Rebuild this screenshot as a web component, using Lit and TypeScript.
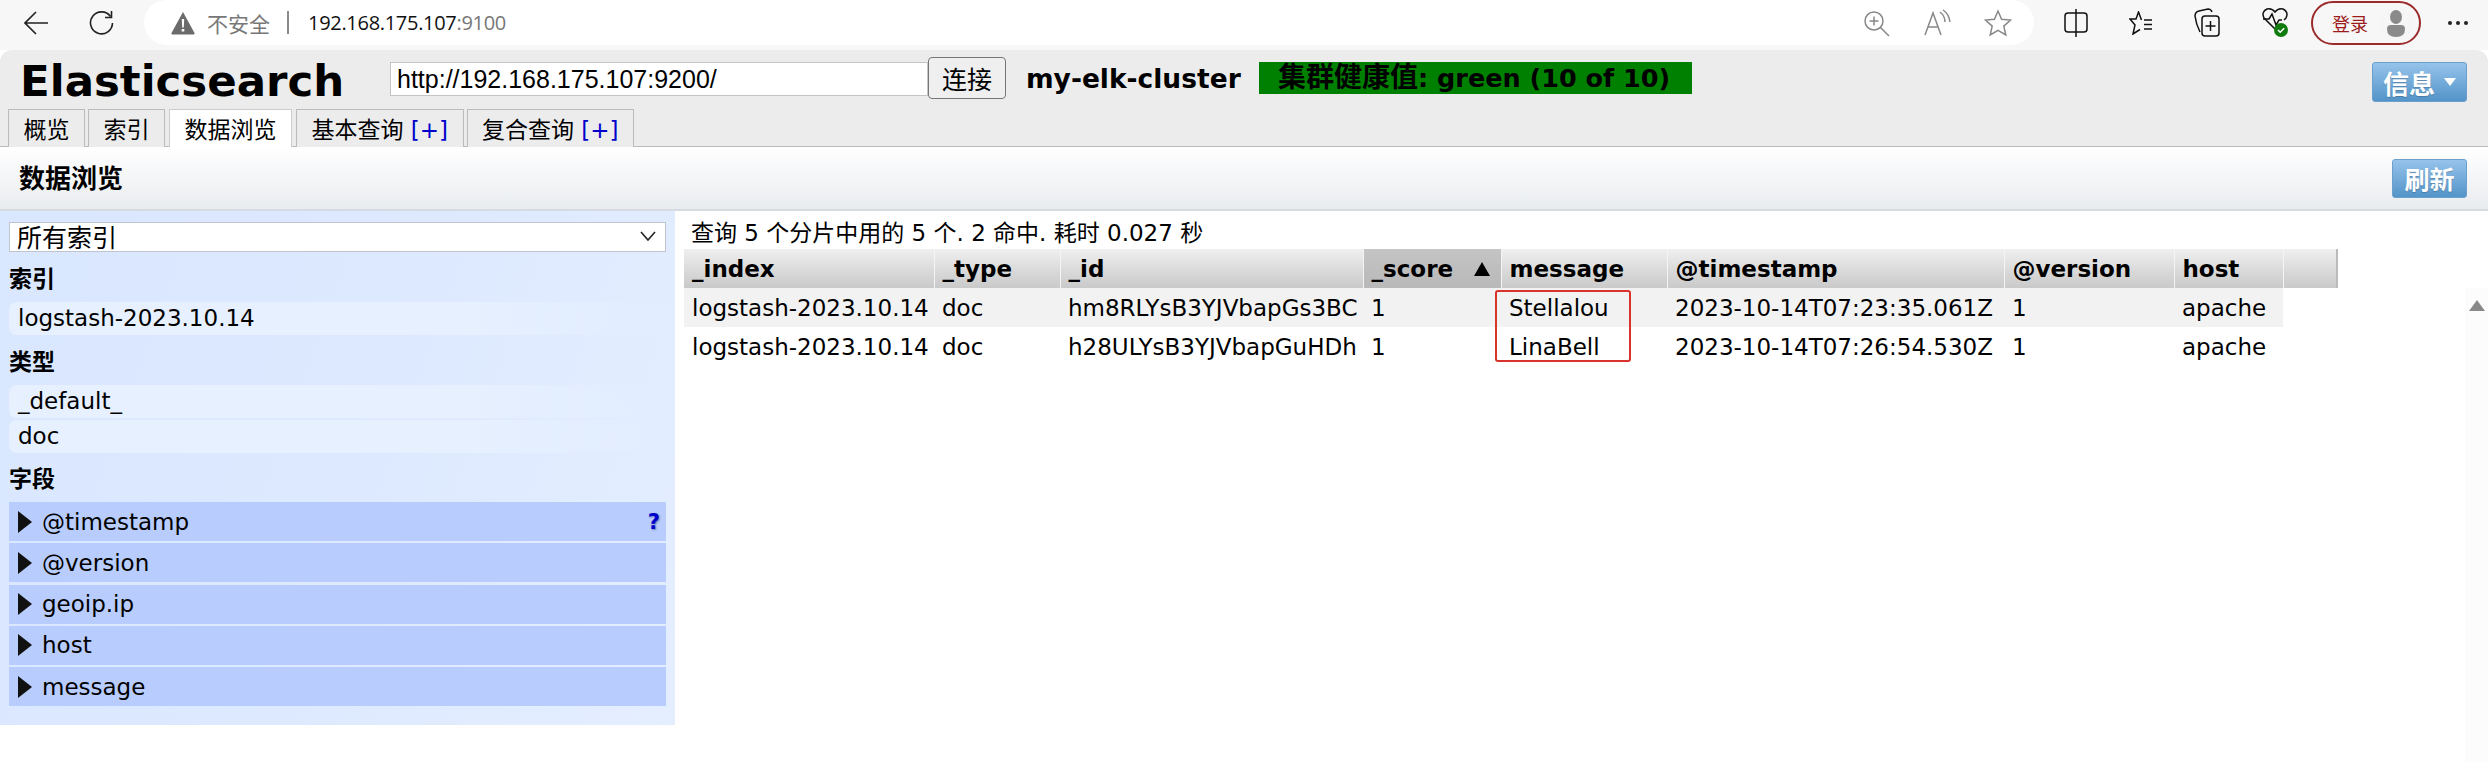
import { LitElement, html, css } from 'lit';
import { customElement } from 'lit/decorators.js';

const columns = [
  { name: '_index', w: 250 },
  { name: '_type', w: 126 },
  { name: '_id', w: 303 },
  { name: '_score', w: 138 },
  { name: 'message', w: 166 },
  { name: '@timestamp', w: 337 },
  { name: '@version', w: 170 },
  { name: 'host', w: 109 },
  { name: '', w: 54 },
];

const rows = [
  ['logstash-2023.10.14', 'doc', 'hm8RLYsB3YJVbapGs3BC', '1', 'Stellalou', '2023-10-14T07:23:35.061Z', '1', 'apache'],
  ['logstash-2023.10.14', 'doc', 'h28ULYsB3YJVbapGuHDh', '1', 'LinaBell', '2023-10-14T07:26:54.530Z', '1', 'apache'],
];

const fields = ['@timestamp', '@version', 'geoip.ip', 'host', 'message'];

@customElement('app-root')
export class AppRoot extends LitElement {
  static styles = css`
    :host {
      display: block;
      width: 2488px;
      height: 762px;
      overflow: hidden;
      background: #fff;
      font-family: "DejaVu Sans", "Noto Sans CJK SC", sans-serif;
      font-size: 23px;
      color: #000;
    }

    /* browser chrome */
    .chrome {
      height: 50px;
      background: #f7f7f7;
      display: flex;
      align-items: flex-start;
      position: relative;
    }
    .nav {
      width: 144px;
      height: 45px;
      flex: none;
      display: flex;
      align-items: center;
      gap: 41px;
      padding-left: 24px;
      box-sizing: border-box;
    }
    .pill {
      width: 1890px;
      height: 45px;
      flex: none;
      background: #fff;
      border-radius: 24px;
      display: flex;
      align-items: center;
      box-sizing: border-box;
      padding-left: 27px;
      font-family: "Open Sans", "Noto Sans CJK SC", sans-serif;
    }
    .unsafe {
      font-family: "Noto Sans CJK SC", sans-serif;
      font-size: 21px;
      color: #777;
      margin-left: 12px;
    }
    .sep {
      width: 2px;
      height: 23px;
      background: #8a8a8a;
      margin: 0 19px 0 17px;
    }
    .url {
      font-size: 20px;
      color: #111;
      letter-spacing: -0.3px;
    }
    .url span { color: #777; }
    .pill-icons {
      margin-left: auto;
      margin-right: 22px;
      display: flex;
      gap: 33px;
      align-items: center;
    }
    .tools {
      display: flex;
      align-items: center;
      height: 45px;
      margin-left: 30px;
      gap: 41px;
      flex: none;
    }
    .tools svg { flex: none; }
    .login {
      width: 110px;
      height: 44px;
      border: 2px solid #9c2b2b;
      border-radius: 22px;
      box-sizing: border-box;
      margin-left: -19px;
      display: flex;
      align-items: center;
      padding-left: 19px;
      gap: 11px;
      color: #9c1c1c;
      font-family: "Noto Sans CJK SC", sans-serif;
      font-size: 18px;
      flex: none;
    }
    .more {
      margin-left: -14px;
      display: flex;
      gap: 4px;
      flex: none;
    }
    .more i {
      display: block;
      flex: none;
      width: 4px;
      height: 4px;
      border-radius: 50%;
      background: #222;
    }

    /* head */
    .head {
      height: 97px;
      background: #ececec;
      border-radius: 12px 12px 0 0;
      border-bottom: 1px solid #bbb;
      box-sizing: border-box;
      display: flex;
      flex-direction: column;
    }
    .head-top {
      height: 59px;
      display: flex;
      align-items: flex-start;
      padding: 7px 21px 0 21px;
      box-sizing: border-box;
    }
    h1 {
      margin: 3px 0 0 -1px;
      width: 370px;
      font-size: 43.5px;
      line-height: 42px;
      font-weight: bold;
      flex: none;
    }
    input {
      width: 538px;
      height: 34px;
      margin: 5px 0 0 0;
      box-sizing: border-box;
      border: 1px solid #c4c4c4;
      padding: 0 6px;
      background: #fff;
      font-family: "Liberation Sans", sans-serif;
      font-size: 25px;
      color: #000;
      outline: none;
      flex: none;
    }
    .connect {
      width: 78px;
      height: 42px;
      padding: 0;
      box-sizing: border-box;
      border: 1px solid #767676;
      border-radius: 4px;
      background: #efefef;
      font-family: "Noto Sans CJK SC", sans-serif;
      font-size: 25px;
      color: #000;
      flex: none;
    }
    .cluster {
      margin: 5px 0 0 20px;
      width: 233px;
      flex: none;
      font-size: 26.5px;
      font-weight: bold;
      line-height: 34px;
      white-space: nowrap;
    }
    .health {
      width: 433px;
      height: 32px;
      margin-top: 5px;
      box-sizing: border-box;
      padding-left: 19px;
      background: #008000;
      font-size: 25.5px;
      line-height: 32px;
      font-weight: bold;
      white-space: nowrap;
      flex: none;
    }
    .health span { font-size: 28px; }
    .btn {
      border: 1px solid #6b9fcc;
      border-radius: 3px;
      background: linear-gradient(#96c3eb, #5394c8);
      color: #fff;
      font-weight: bold;
      box-sizing: border-box;
      display: flex;
      align-items: center;
      justify-content: center;
      text-shadow: 0 1px 1px rgba(0, 0, 0, 0.2);
    }
    .info {
      margin: 5px 0 0 auto;
      width: 95px;
      height: 40px;
      font-size: 26px;
      gap: 9px;
    }
    .info i {
      width: 0;
      height: 0;
      border: 6px solid transparent;
      border-top: 8px solid #fff;
      border-bottom: 0;
    }
    .tabs {
      display: flex;
      padding-left: 8px;
      gap: 3px;
      height: 37px;
    }
    .tab {
      height: 38px;
      box-sizing: border-box;
      padding: 0 14.5px;
      border: 1px solid #bbb;
      border-bottom: none;
      background: #ececec;
      line-height: 41px;
      white-space: nowrap;
    }
    .tab.active {
      background: #fff;
      position: relative;
      z-index: 1;
      border-color: #ccc;
      margin: 0 1px;
    }
    .tab b { font-weight: normal; color: #00c; }

    /* section bar */
    .bar {
      height: 64px;
      box-sizing: border-box;
      border-bottom: 2px solid #d6dbe2;
      background: linear-gradient(#fff, #e9ecef);
      display: flex;
      align-items: center;
      justify-content: space-between;
      padding: 0 21px 4px 19px;
    }
    .bar h2 {
      margin: 0;
      font-size: 26px;
      font-weight: bold;
    }
    .refresh {
      width: 75px;
      height: 39px;
      font-size: 25px;
      margin-top: 4px;
    }

    /* main */
    .main { display: flex; align-items: flex-start; position: relative; }
    .left {
      width: 675px;
      height: 514px;
      flex: none;
      box-sizing: border-box;
      padding: 11px 9px 0 9px;
      background: linear-gradient(110deg, #d9e7ff 0%, #dde9ff 50%, #e4eeff 100%);
    }
    .select {
      height: 30px;
      box-sizing: border-box;
      border: 1px solid #c0c4cc;
      background: #fff;
      padding: 0 9px 2px 7px;
      display: flex;
      align-items: center;
      justify-content: space-between;
      font-family: "Noto Sans CJK SC", sans-serif;
      font-size: 25px;
      line-height: 26px;
    }
    h3 {
      margin: 0;
      font-size: 23px;
      line-height: 28px;
      font-weight: bold;
    }
    .sec-index { margin-top: 13px; }
    .sec-type { margin-top: 13px; }
    .sec-field { margin-top: 12px; }
    .list { margin-top: 9px; display: flex; flex-direction: column; gap: 2px; }
    .item {
      height: 33px;
      line-height: 33px;
      padding-left: 9px;
      border-radius: 8px 0 0 8px;
      margin-right: -9px;
      background: linear-gradient(to right, #e6f0ff 0%, #e6f0ff 70%, rgba(230, 240, 255, 0) 100%);
    }
    .fields { margin-top: 9px; display: flex; flex-direction: column; gap: 2.25px; }
    .field {
      height: 39px;
      background: #b8cdfd;
      display: flex;
      align-items: center;
      padding: 0 6px 0 9px;
      gap: 10px;
    }
    .field i {
      width: 0;
      height: 0;
      border-left: 14px solid #111;
      border-top: 11px solid transparent;
      border-bottom: 11px solid transparent;
    }
    .field u {
      margin-left: auto;
      text-decoration: none;
      font-weight: bold;
      font-size: 21px;
      color: #00c;
      text-shadow: 1px 1px 2px rgba(0, 0, 80, 0.4);
    }
    .right { flex: 1; padding-left: 9px; box-sizing: border-box; }
    .summary {
      height: 38px;
      line-height: 44px;
      padding-left: 7px;
      white-space: nowrap;
    }
    .grid-wrap { position: relative; width: 1653px; }
    table {
      border-collapse: collapse;
      table-layout: fixed;
      width: 1653px;
    }
    th {
      height: 39px;
      padding: 0 8px;
      box-sizing: border-box;
      text-align: left;
      font-weight: bold;
      background: linear-gradient(#efefef, #c9c9c9);
      border-right: 1px solid #f4f4f4;
      white-space: nowrap;
    }
    th:last-child { border-right: 2px solid #bbb; }
    th.sorted { background: linear-gradient(#c4c4c4, #b8b8b8); }
    th.sorted div { display: flex; align-items: center; justify-content: space-between; }
    th.sorted i {
      width: 0;
      height: 0;
      border: 8px solid transparent;
      border-bottom: 14px solid #000;
      border-top: 0;
      margin-right: 3px;
    }
    td {
      height: 39px;
      padding: 0 8px;
      box-sizing: border-box;
      white-space: nowrap;
    }
    tbody tr:first-child td { background: #f2f2f2; }
    tbody td.blank { background: #fff !important; }
    .mark {
      position: absolute;
      left: 811px;
      top: 41px;
      width: 136px;
      height: 72px;
      box-sizing: border-box;
      border: 2px solid #d9342b;
      border-radius: 3px;
    }
    .scroll {
      position: absolute;
      right: 0;
      top: 77px;
      width: 23px;
      height: 474px;
      background: #fcfcfc;
    }
    .scroll i {
      position: absolute;
      left: 4px;
      top: 12px;
      width: 0;
      height: 0;
      border: 8px solid transparent;
      border-bottom: 11px solid #888;
      border-top: 0;
    }
  `;

  renderChrome() {
    return html`
      <div class="chrome">
        <div class="nav">
          <svg width="24" height="24" viewBox="0 0 24 24" fill="none" stroke="#222" stroke-width="1.6">
            <path d="M1 12H24M12 1L1 12L12 23" />
          </svg>
          <svg width="25" height="25" viewBox="0 0 25 25" fill="none" stroke="#222" stroke-width="1.6">
            <path d="M21.5 6.5A11 11 0 1 0 23.5 13" />
            <path d="M22.5 1V7.5H16" />
          </svg>
        </div>
        <div class="pill">
          <svg width="24" height="24" viewBox="0 0 24 24">
            <path d="M12 1L23.5 22a1 1 0 0 1-1 1.5H1.5a1 1 0 0 1-1-1.5Z" fill="#6b6b6b" />
            <path d="M10.8 8h2.4l-.4 8.5h-1.6ZM10.7 18h2.6v2.6h-2.6Z" fill="#fff" />
          </svg>
          <span class="unsafe">不安全</span>
          <span class="sep"></span>
          <span class="url">192.168.175.107<span>:9100</span></span>
          <div class="pill-icons">
            <svg width="28" height="28" viewBox="0 0 28 28" fill="none" stroke="#888" stroke-width="1.5">
              <circle cx="12" cy="12" r="9" /><path d="M12 7.5v9M7.5 12h9M18.5 18.5L27 27" />
            </svg>
            <svg width="28" height="28" viewBox="0 0 28 28" fill="none" stroke="#888" stroke-width="1.5">
              <path d="M2 26L10 4L18 26M5 18H15M17 3q5 4 5 10M20 1q6 4 7 12" />
            </svg>
            <svg width="28" height="28" viewBox="0 0 28 28" fill="none" stroke="#888" stroke-width="1.5">
              <path d="M14 2l3.6 8.2 9 .9-6.8 6 2 8.9-7.8-4.6-7.8 4.6 2-8.9-6.8-6 9-.9Z" />
            </svg>
          </div>
        </div>
        <div class="tools">
          <svg width="24" height="28" viewBox="0 0 24 28" fill="none" stroke="#111" stroke-width="1.5">
            <rect x="1" y="4" width="22" height="19" rx="3" /><path d="M12 0V28" />
          </svg>
          <svg width="24" height="24" viewBox="0 0 24 24" fill="none" stroke="#111" stroke-width="1.5">
            <path d="M12.5 9L9.5 1L7 8H1L6 14L4 23L11 18.5M15 9h8M15 13.5h8M15 18h8" />
          </svg>
          <svg width="26" height="30" viewBox="0 0 26 30" fill="none" stroke="#111" stroke-width="1.5">
            <path d="M6 24Q2 16 1 8Q1 4 5 3L14 1Q17 1 18 4" />
            <rect x="8" y="8" width="17" height="20" rx="3" /><path d="M16.5 13v10M11.5 18h10" />
          </svg>
          <svg width="28" height="32" viewBox="0 0 28 32" fill="none" stroke="#111" stroke-width="1.5">
            <path d="M14 22L3 11Q0 5 6 2Q11 1 14 5Q17 1 22 2Q28 5 25 11L23 13" />
            <path d="M2 12H8L11 7L15 18L18 13H21" />
            <circle cx="20" cy="23" r="7" fill="#107c10" stroke="none" />
            <path d="M17 23l2.2 2.2 4-4" stroke="#fff" />
          </svg>
          <div class="login">
            <span>登录</span>
            <svg width="34" height="38" viewBox="0 0 34 38">
              <circle cx="17" cy="19" r="17" fill="#f6f6f6" />
              <ellipse cx="17" cy="13" rx="6" ry="7" fill="#8a8a8a" />
              <path d="M8 25Q8 21 12 21H22Q26 21 26 25Q26 33 17 33Q8 33 8 25Z" fill="#8a8a8a" />
            </svg>
          </div>
          <div class="more"><i></i><i></i><i></i></div>
        </div>
      </div>
    `;
  }

  renderHead() {
    return html`
      <div class="head">
        <div class="head-top">
          <h1>Elasticsearch</h1>
          <input value="http://192.168.175.107:9200/" />
          <button class="connect">连接</button>
          <div class="cluster">my-elk-cluster</div>
          <div class="health"><span>集群健康值</span>: green (10 of 10)</div>
          <div class="btn info">信息<i></i></div>
        </div>
        <div class="tabs">
          <div class="tab">概览</div>
          <div class="tab">索引</div>
          <div class="tab active">数据浏览</div>
          <div class="tab">基本查询 <b>[+]</b></div>
          <div class="tab">复合查询 <b>[+]</b></div>
        </div>
      </div>
      <div class="bar">
        <h2>数据浏览</h2>
        <div class="btn refresh">刷新</div>
      </div>
    `;
  }

  renderLeft() {
    return html`
      <div class="left">
        <div class="select">
          所有索引
          <svg width="16" height="10" viewBox="0 0 16 10" fill="none" stroke="#222" stroke-width="1.6">
            <path d="M1 1L8 9L15 1" />
          </svg>
        </div>
        <h3 class="sec-index">索引</h3>
        <div class="list"><div class="item">logstash-2023.10.14</div></div>
        <h3 class="sec-type">类型</h3>
        <div class="list">
          <div class="item">_default_</div>
          <div class="item">doc</div>
        </div>
        <h3 class="sec-field">字段</h3>
        <div class="fields">
          ${fields.map(
            (f, i) => html`<div class="field"><i></i>${f}${i === 0 ? html`<u>?</u>` : ''}</div>`
          )}
        </div>
      </div>
    `;
  }

  renderTable() {
    return html`
      <div class="grid-wrap">
        <table>
          <colgroup>${columns.map((c) => html`<col style="width:${c.w}px" />`)}</colgroup>
          <thead>
            <tr>
              ${columns.map((c) =>
                c.name === '_score'
                  ? html`<th class="sorted"><div>${c.name}<i></i></div></th>`
                  : html`<th>${c.name}</th>`
              )}
            </tr>
          </thead>
          <tbody>
            ${rows.map(
              (r) => html`<tr>${r.map((v) => html`<td>${v}</td>`)}<td class="blank"></td></tr>`
            )}
          </tbody>
        </table>
        <div class="mark"></div>
      </div>
    `;
  }

  render() {
    return html`
      ${this.renderChrome()} ${this.renderHead()}
      <div class="main">
        ${this.renderLeft()}
        <div class="right">
          <div class="summary">查询 5 个分片中用的 5 个. 2 命中. 耗时 0.027 秒</div>
          ${this.renderTable()}
        </div>
        <div class="scroll"><i></i></div>
      </div>
    `;
  }
}
